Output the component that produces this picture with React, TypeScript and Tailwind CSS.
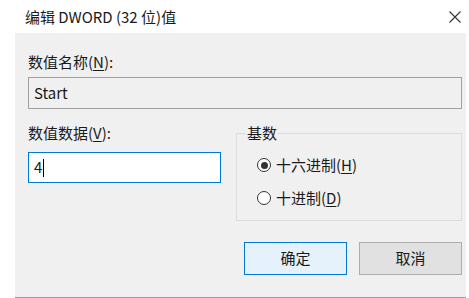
import React from "react";

const font = { fontFamily: '"Noto Sans CJK SC", "Noto Sans", sans-serif' };

function Radio({ checked, children }: { checked?: boolean; children: React.ReactNode }) {
  return (
    <div className="flex items-center gap-[5px] h-[20px]">
      <span className="w-[14px] h-[14px] rounded-full border border-[#333] bg-white flex items-center justify-center">
        {checked && <span className="w-[7px] h-[7px] rounded-full bg-[#333]" />}
      </span>
      <span className="text-[15px] leading-[20px] text-[#1a1a1a]">{children}</span>
    </div>
  );
}

export default function App() {
  return (
    <div className="w-[469px] h-[298px] bg-white flex flex-col overflow-hidden" style={font}>
      <div className="h-[33px] flex items-center justify-between pl-[25px] pr-[6px] shrink-0">
        <span className="text-[15px] text-[#1a1a1a] leading-[20px]">编辑 DWORD (32 位)值</span>
        <svg width="12" height="12" viewBox="0 0 12 12" className="mr-[2px]">
          <path d="M0.5 0.5 L11.5 11.5 M11.5 0.5 L0.5 11.5" stroke="#333" strokeWidth="1.1" />
        </svg>
      </div>
      <div className="flex-1 ml-[15px] mr-[3px] bg-[#f0f0f0] border-b border-[#6fa8dc] pl-[13px] pr-[4px] pt-[19px] flex flex-col">
        <div className="text-[15px] leading-[20px] text-[#1a1a1a]">
          数值名称(<span className="underline underline-offset-2">N</span>):
        </div>
        <div className="mt-[5px] h-[32px] border border-[#a0a0a0] bg-[#f0f0f0] flex items-center pl-[5px] text-[15px] text-[#1a1a1a]">
          Start
        </div>
        <div className="flex mt-[14px]">
          <div className="w-[193px] flex flex-col">
            <div className="text-[15px] leading-[20px] text-[#1a1a1a]">
              数值数据(<span className="underline underline-offset-2">V</span>):
            </div>
            <div className="mt-[9px] h-[31px] border border-[#0078d7] bg-white flex items-center pl-[5px] text-[15px] text-[#1a1a1a]">
              4<span className="inline-block w-[1px] h-[18px] bg-black ml-[1px]" />
            </div>
          </div>
          <fieldset className="ml-[15px] flex-1 h-[98px] border border-[#dcdcdc] pl-[20px] pt-[12px] m-0">
            <legend className="text-[15px] leading-[20px] text-[#1a1a1a] px-[1px] ml-[-11px]">基数</legend>
            <Radio checked>
              十六进制(<span className="underline underline-offset-2">H</span>)
            </Radio>
            <div className="h-[13px]" />
            <Radio>
              十进制(<span className="underline underline-offset-2">D</span>)
            </Radio>
          </fieldset>
        </div>
        <div className="flex justify-end gap-[12px] mt-[21px] pr-[0px]">
          <button className="w-[103px] h-[33px] border border-[#0078d7] bg-[#e5f1fb] text-[15px] text-[#1a1a1a]">确定</button>
          <button className="w-[103px] h-[33px] border border-[#adadad] bg-[#e1e1e1] text-[15px] text-[#1a1a1a]">取消</button>
        </div>
      </div>
    </div>
  );
}
